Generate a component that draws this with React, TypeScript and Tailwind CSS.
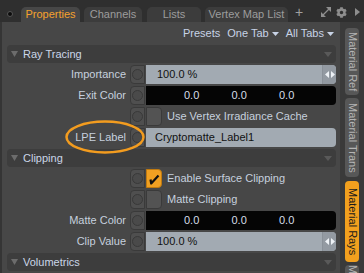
import * as React from "react";
import { FaCog } from "react-icons/fa";

const labelColor = "text-[#c6d0de]";

function Section({ title }: { title: string }) {
  return (
    <div className="flex h-[18px] items-center rounded-[4px] bg-[#3d3d3d] pl-[4px] pr-[4px]">
      <svg width="7" height="6" viewBox="0 0 7 6" className="mr-[5px]">
        <path d="M0 0H7L3.5 6Z" fill="#6c6c6c" />
      </svg>
      <span className="text-[#cbd6e8]">{title}</span>
      <svg width="8" height="5" viewBox="0 0 8 5" className="ml-auto">
        <path d="M0 0H8L4 5Z" fill="#595959" />
      </svg>
    </div>
  );
}

function Row({ label, children }: { label?: string; children: React.ReactNode }) {
  return (
    <div className="flex h-[19px] items-stretch">
      <div className={`flex w-[119px] items-center justify-end ${labelColor}`}>{label}</div>
      <div className="ml-[4px] flex flex-1">{children}</div>
    </div>
  );
}

function Knob() {
  return (
    <div className="flex w-[15px] items-center justify-center rounded-l-[4px] border border-[#3a3a3a] bg-[#4f4f4f]">
      <div className="h-[11px] w-[11px] rounded-full border border-[#393939] bg-[#4a4a4a]" />
    </div>
  );
}

function Percent() {
  return (
    <>
      <Knob />
      <div className="ml-[1px] flex flex-1 items-center overflow-hidden rounded-r-[4px] bg-[#a2aab2]">
        <span className="flex-1 pl-[11px] text-[#111]">100.0 %</span>
        <div className="flex h-full w-[14px] items-center justify-center border-l border-[#8a9199] bg-[#939aa2]">
          <svg width="10" height="7" viewBox="0 0 10 7">
            <path d="M0 3.5L4 0V7Z M10 3.5L6 0V7Z" fill="#eef2f6" />
          </svg>
        </div>
      </div>
    </>
  );
}

function ColorField() {
  return (
    <>
      <Knob />
      <div className="ml-[1px] flex flex-1 items-center rounded-r-[4px] bg-[#050505] pl-[38px] text-[#d6dee8]">
        <span className="w-[47.5px]">0.0</span>
        <span className="w-[47.5px]">0.0</span>
        <span className="w-[47.5px]">0.0</span>
      </div>
    </>
  );
}

function Check({ on, text }: { on?: boolean; text: string }) {
  return (
    <>
      <Knob />
      <div
        className={`ml-[1px] flex w-[16px] items-center justify-center rounded-r-[4px] border ${
          on ? "border-[#c07a10] bg-[#f0a022]" : "border-[#3a3a3a] bg-[#535353]"
        }`}
      >
        {on && (
          <svg width="12" height="12" viewBox="0 0 12 12">
            <path d="M2.5 6.5L3.2 10.5L10.5 2.5" stroke="#111" strokeWidth="2.2" fill="none" strokeLinejoin="round" />
          </svg>
        )}
      </div>
      <span className={`ml-[5px] flex items-center ${labelColor}`}>{text}</span>
    </>
  );
}

function Tab({ text, active, w, ml }: { text: string; active?: boolean; w: string; ml: string }) {
  return (
    <div
      className={`${w} ${ml} flex h-[15px] items-center justify-center rounded-t-[5px] ${
        active ? "bg-[#474747] text-[#f5a22e]" : "bg-[#3c3c3c] text-[#9c9c9c]"
      }`}
    >
      {text}
    </div>
  );
}

function VTab({ text, active, h, mt }: { text: string; active?: boolean; h: string; mt: string }) {
  return (
    <div
      className={`${h} ${mt} flex w-[14px] shrink-0 items-center justify-center overflow-hidden rounded-[4px] ${
        active ? "bg-[#f2a01e] text-[#1a1a1a]" : "bg-[#575757] text-[#b4b4b4]"
      }`}
    >
      <span className="whitespace-nowrap [writing-mode:vertical-rl]">{text}</span>
    </div>
  );
}

export default function App() {
  return (
    <div className="relative h-[273px] w-[364px] overflow-hidden bg-[#2f2f2f] font-['Liberation_Sans',Arial,sans-serif] text-[11px] leading-none">
      {/* tab bar */}
      <div className="flex h-[22px] items-end">
        <div className="mb-[5px] ml-[7px] h-[6px] w-[6px] rounded-full border border-[#555] bg-[#0c0c0c]" />
        <Tab text="Properties" active w="w-[59px]" ml="ml-[8px]" />
        <Tab text="Channels" w="w-[58px]" ml="ml-[4px]" />
        <Tab text="Lists" w="w-[54px]" ml="ml-[5px]" />
        <Tab text="Vertex Map List" w="w-[83px]" ml="ml-[4px]" />
        <span className="mb-[3px] ml-[7px] text-[14px] text-[#a0a0a0]">+</span>
        <div className="mb-[4px] ml-[17px] flex items-center">
          <svg width="12" height="12" viewBox="0 0 12 12">
            <path d="M1.5 10.5L10.5 1.5" stroke="#8e8e8e" strokeWidth="1.2" />
            <path d="M6 1H11V6Z M1 6V11H6Z" fill="#8e8e8e" />
          </svg>
          <FaCog className="ml-[4px] text-[#8e8e8e]" size={11} />
          <svg width="5" height="8" viewBox="0 0 5 8" className="ml-[8px]">
            <path d="M0 0L5 4L0 8Z" fill="#8e8e8e" />
          </svg>
        </div>
      </div>

      <div className="flex h-[251px]">
        {/* main panel */}
        <div className="w-[340px] border-l-2 border-[#353535] bg-[#474747] pl-[5px] pr-[4px]">
          <div className="flex h-[23px] items-center justify-end gap-[7px] pr-[2px] text-[#c8d3e6]">
            <span>Presets</span>
            <span className="flex items-center gap-[3px]">
              One Tab
              <svg width="7" height="4" viewBox="0 0 7 4"><path d="M0 0H7L3.5 4Z" fill="#c8d3e6" /></svg>
            </span>
            <span className="flex items-center gap-[3px]">
              All Tabs
              <svg width="7" height="4" viewBox="0 0 7 4"><path d="M0 0H7L3.5 4Z" fill="#c8d3e6" /></svg>
            </span>
          </div>

          <div className="flex flex-col gap-[2px]">
            <Section title="Ray Tracing" />
            <Row label="Importance"><Percent /></Row>
            <Row label="Exit Color"><ColorField /></Row>
            <Row><Check text="Use Vertex Irradiance Cache" /></Row>
            <Row label="LPE Label">
              <Knob />
              <div className="ml-[1px] flex flex-1 items-center rounded-r-[4px] bg-[#a2aab2] pl-[9px] text-[#111]">
                Cryptomatte_Label1
              </div>
            </Row>
            <Section title="Clipping" />
            <Row><Check on text="Enable Surface Clipping" /></Row>
            <Row><Check text="Matte Clipping" /></Row>
            <Row label="Matte Color"><ColorField /></Row>
            <Row label="Clip Value"><Percent /></Row>
            <Section title="Volumetrics" />
          </div>
        </div>

        {/* side tabs */}
        <div className="flex flex-1 flex-col bg-[#3a3a3a] pl-[5px]">
          <VTab text="Material Ref" h="h-[67px]" mt="mt-[6px]" />
          <VTab text="Material Trans" h="h-[79px]" mt="mt-[3px]" />
          <VTab text="Material Rays" active h="h-[81px]" mt="mt-[4px]" />
          <VTab text="Material" h="h-[40px]" mt="mt-[3px]" />
        </div>
      </div>

      {/* annotation */}
      <svg className="absolute left-[64px] top-[119px]" width="82" height="36" viewBox="0 0 82 36">
        <ellipse cx="41" cy="18" rx="38.5" ry="15.5" stroke="#f39c1f" strokeWidth="2.5" fill="none" />
      </svg>
    </div>
  );
}
